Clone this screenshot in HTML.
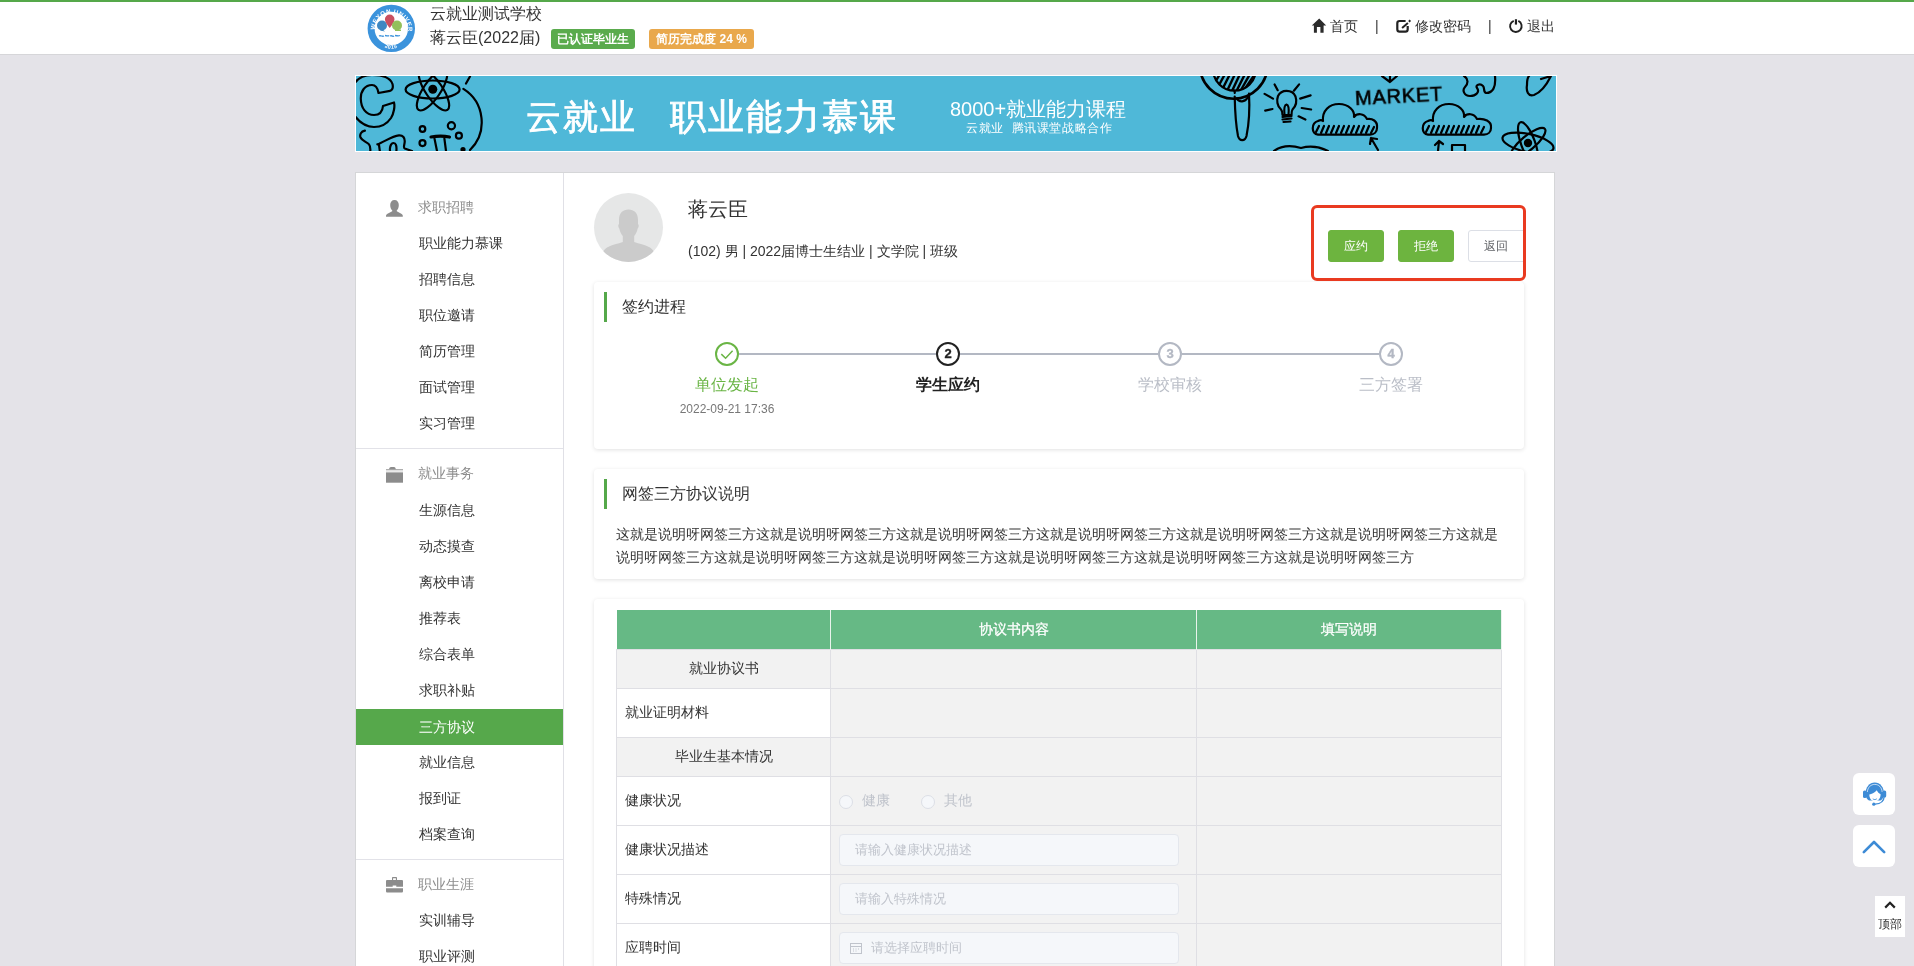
<!DOCTYPE html>
<html><head><meta charset="utf-8">
<style>
*{margin:0;padding:0;box-sizing:border-box;}
html,body{width:1914px;height:966px;overflow:hidden;}
body{will-change:transform;background:#e4e3e8;font-family:"Liberation Sans",sans-serif;color:#333;position:relative;}
.abs{position:absolute;}
#hdr{left:0;top:0;width:1914px;height:55px;background:#fff;border-bottom:1px solid #d6d6d9;}
#hdr::before{content:"";position:absolute;left:0;top:0;width:1914px;height:2px;background:#55a84a;}
.badge{position:absolute;top:29px;height:20px;line-height:20px;border-radius:3px;color:#fff;font-size:12px;font-weight:bold;text-align:center;}
.nav{position:absolute;top:16px;font-size:14px;color:#333;line-height:20px;white-space:nowrap;}
.sep{position:absolute;top:16px;font-size:14px;color:#333;line-height:20px;}
#banner{left:355px;top:75px;width:1202px;height:77px;background:#4fb8d8;border:1px solid #fff;overflow:hidden;}
#panel{left:355px;top:172px;width:1200px;height:800px;background:#fff;border:1px solid #d5d6d8;}
#side{left:356px;top:173px;width:208px;height:800px;border-right:1px solid #e0e0e6;}
.sh{position:absolute;left:62px;font-size:14px;color:#8c8c8c;line-height:20px;white-space:nowrap;}
.si{position:absolute;left:0;width:207px;height:36px;line-height:36px;padding-left:63px;font-size:14px;color:#333;white-space:nowrap;}
.si.act{background:#56a84b;color:#fff;}
.sdiv{position:absolute;left:0;width:207px;height:1px;background:#e2e2e8;}
.card{position:absolute;left:594px;width:930px;background:#fff;border-radius:4px;box-shadow:0 1px 4px rgba(0,0,0,0.12);}
.gbar{position:absolute;left:10px;width:3px;height:30px;background:#55a84a;}
.ctitle{position:absolute;left:28px;font-size:16px;color:#333;line-height:20px;white-space:nowrap;}

.btn{position:absolute;top:230px;width:56px;height:32px;line-height:30px;border-radius:3px;font-size:12px;text-align:center;border:1px solid transparent;}
.btn.g{background:#6db43f;border-color:#6db43f;color:#fff;}
.btn.w{background:#fff;border-color:#dcdfe6;color:#606266;width:58px;padding-right:3px;}
.line{position:absolute;top:71px;height:2px;}
.step{position:absolute;top:60px;width:24px;height:24px;border:2px solid;border-radius:50%;font-size:13px;font-weight:bold;line-height:20px;text-align:center;background:#fff;-webkit-text-stroke:0.35px currentColor;}
.slab{position:absolute;top:93px;width:200px;text-align:center;font-size:16px;line-height:20px;white-space:nowrap;}
.tb{position:absolute;left:22px;top:11px;width:885px;border-collapse:collapse;table-layout:fixed;font-size:14px;color:#333;}
.tb td{border:1px solid #dfdfe4;padding:0;vertical-align:middle;}
.tb .th td{background:#66b985;color:#fff;text-align:center;border-color:#e9f3ec;border-top:none;border-bottom:none;padding-top:1px;-webkit-text-stroke:0.25px #fff}
.tb .th td:first-child{border-left:none}
.tb td.gc{background:#f2f2f2;}
.tb td.c{text-align:center;}
.tb td.lab{background:#fff;padding-left:8px;}
.radio{position:relative;top:1px;display:inline-block;width:14px;height:14px;border:1px solid #dcdfe6;border-radius:50%;background:#f5f7fa;vertical-align:middle;margin-left:8px;}
.rl{display:inline-block;vertical-align:middle;margin-left:9px;color:#c0c4cc;font-size:14px;}
.inp{position:relative;margin-left:8px;width:340px;height:32px;line-height:30px;border:1px solid #e4e7ed;border-radius:4px;background:#f5f7fa;color:#c0c4cc;font-size:13px;padding-left:15px;white-space:nowrap;}
.fb{position:absolute;left:1853px;width:42px;height:42px;background:#fff;border-radius:6px;padding:8px;}
</style></head>
<body>
<div id="hdr" class="abs">
  <svg class="abs" style="left:366px;top:3px" width="51" height="51" viewBox="0 0 51 51">
    <defs><path id="ringtop" d="M9 27 A16.5 16.5 0 0 1 42 27"/><path id="ringbot" d="M15 42 A16.5 16.5 0 0 0 36 42"/></defs>
    <circle cx="25.3" cy="25.4" r="20.2" fill="#fff" stroke="#3b93dc" stroke-width="7"/>
    <text font-family="Liberation Sans" font-size="6.2" font-weight="bold" fill="#fff" letter-spacing="0.4"><textPath href="#ringtop">WEYON UNIVERSITY</textPath></text>
    <text font-family="Liberation Sans" font-size="5.5" font-weight="bold" fill="#fff" letter-spacing="0.3"><textPath href="#ringbot" startOffset="18%">2015</textPath></text>
    <circle cx="16" cy="22.5" r="5" fill="#3d87c2"/>
    <path d="M16 26 L19 28.5 L14 27.5Z" fill="#3d87c2"/>
    <path d="M23.7 11.5 a4.8 4.8 0 0 1 4.8 4.8 c0 3.2 -2.8 6 -4.8 8.8 c-2 -2.8 -4.8 -5.6 -4.8 -8.8 a4.8 4.8 0 0 1 4.8 -4.8z" fill="#c94f60"/>
    <circle cx="31" cy="22.5" r="5" fill="#93c05b"/>
    <path d="M29 26.5 h6 v1.5 h-6z" fill="#93c05b"/>
    <path d="M13 33 c2 -1 3 1 5 0 M19 32.5 c2 0 3 1 4 0 M24 33 c2 -1 3 1 4 0 M29 32.5 c2 0 3 1 5 0" stroke="#3b93dc" stroke-width="1.3" fill="none"/>
  </svg>
  <div class="abs" style="left:430px;top:3px;font-size:16px;line-height:22px;color:#333;white-space:nowrap">云就业测试学校</div>
  <div class="abs" style="left:430px;top:27px;font-size:16px;line-height:22px;color:#333;white-space:nowrap">蒋云臣(2022届)</div>
  <div class="badge" style="left:551px;width:84px;background:#5aab4d">已认证毕业生</div>
  <div class="badge" style="left:649px;width:105px;background:#e9a84c">简历完成度 24 %</div>
  <svg class="abs" style="left:1311px;top:18px" width="16" height="16" viewBox="0 0 16 16"><path d="M8.2 0.5 L15.2 7.6 H12.6 V14.7 H9.4 V9.1 H5.9 V14.7 H2.9 V7.6 H0.8 Z" fill="#2b2b2b"/></svg>
  <div class="nav" style="left:1330px">首页</div>
  <div class="sep" style="left:1375px">|</div>
  <svg class="abs" style="left:1395px;top:19px" width="16" height="15" viewBox="0 0 16 15"><path d="M10.6 2 H4.6 C3 2 2.3 2.8 2.3 4.3 V10.2 C2.3 11.8 3 12.6 4.6 12.6 H10.4 C12 12.6 12.7 11.8 12.7 10.2 V7" fill="none" stroke="#222" stroke-width="2.2"/><path d="M7.1 9 L12.9 4.1" stroke="#222" stroke-width="2"/><path d="M13.9 2.7 L15.4 1.3" stroke="#222" stroke-width="2"/></svg>
  <div class="nav" style="left:1415px">修改密码</div>
  <div class="sep" style="left:1488px">|</div>
  <svg class="abs" style="left:1508px;top:19px" width="16" height="15" viewBox="0 0 16 15"><path d="M5.75 1.78 A5.8 5.8 0 1 0 10.31 1.93" fill="none" stroke="#222" stroke-width="1.9"/><path d="M7.95 0.2 V5.6" stroke="#222" stroke-width="2.2"/></svg>
  <div class="nav" style="left:1527px">退出</div>
</div>
<div id="banner" class="abs">
<svg width="1200" height="75" viewBox="0 0 1200 75" style="position:absolute;left:0;top:0"><defs><clipPath id="lensclip"><circle cx="878.5" cy="-6.7" r="21.4"/></clipPath></defs>
<g fill="none" stroke="#000" stroke-width="2.2" stroke-linecap="round" stroke-linejoin="round">
  <path d="M-2 8 C2 2 8 -1 16 -1 C26 -1 34 1 36.5 8 C37.5 12 36 14.5 34 14.8 L22.5 17 C21.5 11 19.5 9 16 9 C9 9 4.5 15 4.8 23 C5 32 10 39 18 39 C23 39 26.5 36 27 30 L38 26.5 C39 30 38 37 35 42 C31 48 25 51 18 51 C10 51 3 46 -2 39"/>
  <ellipse cx="76.6" cy="13.5" rx="27" ry="9"/>
  <ellipse cx="78" cy="14" rx="24" ry="8.5" transform="rotate(56 78 14)"/>
  <ellipse cx="76" cy="14" rx="24" ry="8.5" transform="rotate(-56 76 14)"/>
  <path d="M107.4 12.9 A39.2 39.2 0 0 1 114 74"/>
  <path d="M110 7.5 L114 0.5"/>
  <circle cx="66.5" cy="53" r="2.8"/>
  <circle cx="95.4" cy="49.7" r="3.6"/>
  <circle cx="102.9" cy="59.7" r="3"/>
  <circle cx="66.5" cy="67.1" r="3"/>
  <path d="M75 61 C80 60 89 60 93.5 61" stroke-width="3.2"/>
  <path d="M78.5 62.6 L81 75 M88.4 62.6 L90 75"/>
  <circle cx="107" cy="73.5" r="1.5" fill="#000"/>
  <path d="M8.9 54.7 C5 55.5 3.5 58.5 4.5 61.5 C6 65 11 66 13 68.4 C14.3 70 14.5 72 14.3 75"/>
  <path d="M21.4 68.4 C28 66 36 60 42.9 59.3 C47 59 49 62 48.7 65.9 C48.5 69 47 72 48.7 72.5 L56 75 M23 69 L23.8 75 M34 75 C33.5 71 35 67 37.5 67 C40 67 40.8 70 40.4 75"/>
  <path d="M878.7 20.6 C879 35 880 50 882 60 C883.5 65.5 889 65.5 890.5 60 C892.5 50 894 35 893 17.7"/>
  <path d="M880.8 22.5 C883 26.5 889 26.5 891.7 21.5"/>
  <circle cx="877.7" cy="-11.2" r="33.9" stroke-width="2.6"/>
  <circle cx="878.5" cy="-6.7" r="21.4"/><path d="M878.5 14.7 L878.8 17"/>
  <g clip-path="url(#lensclip)" stroke-width="2.4"><path d="M858 8 L864 -2 M862.5 10 L869 -2 M867 12 L874 -2 M871.5 14 L879 -2 M876 15 L884 -2 M880.5 15 L889 -2 M885 14 L894 -2 M889.5 12 L899 -2 M894 10 L902 -2"/></g>
  <path d="M925 33.5 C921 30 920.5 24 922 20 C924 16 927.5 14.8 930.5 14.8 C934 14.8 938 16.5 939.5 20.5 C941 25 940 30 936.5 33.5 C935.5 35 935.5 37 935.5 39 L926.5 39 C926.5 37 926.5 35 925 33.5Z"/>
  <path d="M928.5 39 C928 34 928.5 29 930.5 28.5 C932.5 29 933 34 932.5 39"/>
  <path d="M926.5 41 L935.5 40 M926.5 43.5 L935.5 42.5 M927.5 46 L934.5 45.5"/>
  <path d="M918.6 8.4 L921.7 14.2 M937.9 14.7 L943.1 8.4 M908.6 17.9 L917 22.6 M944.2 22.6 L954.6 19.4 M909.2 34.6 L916.5 33 M945.7 32 L955.1 33.5 M942.6 40.3 L949.4 43.5"/>
  <path d="M962 58.6 C955 58 955 47 962 45 C964 44 966 44 967 45 C966 35 973 28 983 28 C993 28 999 35 998 41 C1001 37 1008 37 1011 43 C1016 42 1022 45 1021 52 C1021 56 1018 58.6 1014 58.6 Z"/>
  <path d="M960 56 L963 50 M965 57 L968 50 M970 57 L973 50 M975 57 L978 50 M980 57 L983 50 M985 57 L988 50 M990 57 L993 50 M995 57 L998 50 M1000 57 L1003 50 M1005 57 L1008 50 M1010 57 L1013 50 M1015 57 L1018 51"/>
  <path d="M1072 58.6 C1065 58 1065 47 1072 45 C1074 44 1076 44 1077 45 C1076 35 1083 28 1093 28 C1103 28 1109 35 1108 41 C1111 37 1118 37 1121 43 C1128 42 1136 45 1135 52 C1135 56 1132 58.6 1128 58.6 Z"/>
  <path d="M1070 56 L1073 50 M1075 57 L1078 50 M1080 57 L1083 50 M1085 57 L1088 50 M1090 57 L1093 50 M1095 57 L1098 50 M1100 57 L1103 50 M1105 57 L1108 50 M1110 57 L1113 50 M1115 57 L1118 50 M1120 57 L1123 50 M1125 57 L1128 51"/>
  <path d="M1026 0 L1034 6 L1041 0 M1034 6 L1034 0"/>
  <path d="M1108 0 C1113 3 1112 8 1109 11 C1106 14 1108 20 1114 20 C1120 20 1124 16 1121 12 C1119 9 1124 7 1127 10 C1129 12 1127 16 1130 17 C1137 17 1140 11 1139 0"/>
  <path d="M1195 0 C1191 8 1186 16 1178 19 C1172 21 1170 15 1171 9 C1171 4 1172 1 1173 0 M1185 3 L1195 0"/>
  <ellipse cx="1172" cy="67" rx="26" ry="9" transform="rotate(12 1172 67)"/>
  <ellipse cx="1172" cy="67" rx="22" ry="7" transform="rotate(70 1172 67)"/>
  <ellipse cx="1172" cy="67" rx="22" ry="7" transform="rotate(-40 1172 67)"/>
  <path d="M1022 74 L1015 62 M1015 62 L1014 68 M1015 62 L1021 63"/>
  <path d="M1082 75 L1083 65 M1083 65 L1079 69 M1083 65 L1087 68"/>
  <path d="M1096 75 L1096 69 L1109 69 L1109 75"/>
  <path d="M918 75 C925 70 935 69 945 72 C952 70 962 70 972 75"/>
</g>
<circle cx="76.8" cy="13.3" r="4.5" fill="#000"/>
<circle cx="1172" cy="67" r="4.2" fill="#000"/>
<text x="999" y="26.5" font-family="Liberation Sans" font-size="20" fill="#000" stroke="#000" stroke-width="0.6" transform="rotate(-3 1040 20)" letter-spacing="0.8">MARKET</text>
</svg>
<div class="abs" style="left:170px;top:21px;font-size:35px;line-height:40px;color:#fff;white-space:nowrap;letter-spacing:2px;-webkit-text-stroke:0.8px #fff">云就业</div>
<div class="abs" style="left:314px;top:21px;font-size:36px;line-height:40px;color:#fff;white-space:nowrap;letter-spacing:2px;-webkit-text-stroke:0.8px #fff">职业能力慕课</div>
<div class="abs" style="left:594px;top:21px;font-size:20px;line-height:24px;color:#fff;white-space:nowrap">8000+就业能力课程</div>
<div class="abs" style="left:610px;top:44px;font-size:12px;line-height:16px;color:#fff;white-space:nowrap;letter-spacing:0.6px">云就业&nbsp;&nbsp;腾讯课堂战略合作</div>
</div>
<div id="panel" class="abs"></div>
<div id="side" class="abs">
  <svg class="abs" style="left:30px;top:27px" width="17" height="17" viewBox="0 0 17 17"><path d="M8.5 0 C5.8 0 4.2 2 4.2 5 C4.2 7.5 5 9.3 6.2 10.3 L6.2 11.2 L1.5 13.8 C0.5 14.4 0 15 0 16 V16.8 H16.8 V16 C16.8 15 16.3 14.4 15.3 13.8 L10.8 11.2 V10.3 C12 9.3 12.8 7.5 12.8 5 C12.8 2 11.2 0 8.5 0Z" fill="#8c8c8c"/></svg>
  <div class="sh" style="top:24px">求职招聘</div>
  <div class="si" style="top:52px">职业能力慕课</div>
  <div class="si" style="top:88px">招聘信息</div>
  <div class="si" style="top:124px">职位邀请</div>
  <div class="si" style="top:160px">简历管理</div>
  <div class="si" style="top:196px">面试管理</div>
  <div class="si" style="top:232px">实习管理</div>
  <div class="sdiv" style="top:275px"></div>
  <svg class="abs" style="left:30px;top:294px" width="17" height="16" viewBox="0 0 17 16"><path d="M3 2.3 C3.3 0.8 4 0 5 0 H8 C9 0 9.5 0.8 9.8 2.3Z" fill="#8c8c8c"/><rect x="0" y="2.3" width="17" height="1.1" fill="#8c8c8c"/><rect x="0" y="3.4" width="17" height="2" fill="#e9e9e9"/><rect x="0" y="5.4" width="17" height="10.3" fill="#8c8c8c"/></svg>
  <div class="sh" style="top:290px">就业事务</div>
  <div class="si" style="top:319px">生源信息</div>
  <div class="si" style="top:355px">动态摸查</div>
  <div class="si" style="top:391px">离校申请</div>
  <div class="si" style="top:427px">推荐表</div>
  <div class="si" style="top:463px">综合表单</div>
  <div class="si" style="top:499px">求职补贴</div>
  <div class="si act" style="top:536px">三方协议</div>
  <div class="si" style="top:571px">就业信息</div>
  <div class="si" style="top:607px">报到证</div>
  <div class="si" style="top:643px">档案查询</div>
  <div class="sdiv" style="top:686px"></div>
  <svg class="abs" style="left:30px;top:704px" width="17" height="16" viewBox="0 0 17 16"><path d="M6 3.2 V1 C6 0.4 6.4 0 7 0 H10 C10.6 0 11 0.4 11 1 V3.2 H9.9 V1.2 H7.1 V3.2Z" fill="#8c8c8c"/><path d="M1.2 3 H15.8 C16.5 3 17 3.5 17 4.2 V9.8 H10.3 V8.5 H6.7 V9.8 H0 V4.2 C0 3.5 0.5 3 1.2 3Z" fill="#8c8c8c"/><path d="M0 11.2 H17 V14.2 C17 15 16.4 15.5 15.6 15.5 H1.4 C0.6 15.5 0 15 0 14.2Z" fill="#8c8c8c"/></svg>
  <div class="sh" style="top:701px">职业生涯</div>
  <div class="si" style="top:729px">实训辅导</div>
  <div class="si" style="top:765px">职业评测</div>
</div>

<div id="main">
  <div class="abs" style="left:594px;top:193px;width:69px;height:69px;border-radius:50%;background:#e6e7e7;overflow:hidden">
    <svg width="69" height="69" viewBox="0 0 69 69"><path d="M34.5 16.6 C29 16.6 25 20 25 27 L25 31 C24 31.5 24 34 25.3 35.5 C26 39 27.5 41.5 28.8 43 L28.8 49 C24 50.5 18 52 14 54 C11.5 55 10 57 9 59 L9 69 H60 V59 C59 57 57.5 55 55 54 C51 52 45 50.5 40.2 49 L40.2 43 C41.5 41.5 43 39 43.7 35.5 C45 34 45 31.5 44 31 L44 27 C44 20 40 16.6 34.5 16.6Z" fill="#cbcbcb"/></svg>
  </div>
  <div class="abs" style="left:688px;top:197px;font-size:20px;line-height:24px;color:#333;white-space:nowrap">蒋云臣</div>
  <div class="abs" style="left:688px;top:241px;font-size:14px;line-height:20px;color:#333;white-space:nowrap">(102) 男 | 2022届博士生结业 | 文学院 | 班级</div>
  <div class="abs" style="left:1311px;top:205px;width:215px;height:76px;border:3px solid #e93a20;border-radius:6px;z-index:2"></div>
  <div class="btn g" style="left:1328px">应约</div>
  <div class="btn g" style="left:1398px">拒绝</div>
  <div class="btn w" style="left:1468px">返回</div>

  <div class="card" style="top:282px;height:167px">
    <div class="gbar" style="top:10px"></div>
    <div class="ctitle" style="top:15px">签约进程</div>
    <div class="line" style="left:145px;width:197px;background:#b3b8c3"></div>
    <div class="line" style="left:366px;width:198px;background:#b3b8c3"></div>
    <div class="line" style="left:588px;width:197px;background:#b3b8c3"></div>
    <div class="step" style="left:121px;border-color:#6ab545"><svg width="20" height="20" viewBox="0 0 20 20" style="position:absolute;left:0;top:0"><path d="M4.3 10.1 L8.6 14.3 L15.6 6.8" fill="none" stroke="#6ab545" stroke-width="1.5"/></svg></div>
    <div class="step" style="left:342px;border-color:#222;color:#222">2</div>
    <div class="step" style="left:564px;border-color:#b3b8c3;color:#b3b8c3">3</div>
    <div class="step" style="left:785px;border-color:#b3b8c3;color:#b3b8c3">4</div>
    <div class="slab" style="left:33px;color:#6ab545">单位发起</div>
    <div class="slab" style="left:254px;color:#222;font-weight:bold">学生应约</div>
    <div class="slab" style="left:476px;color:#babec7">学校审核</div>
    <div class="slab" style="left:697px;color:#babec7">三方签署</div>
    <div class="abs" style="left:33px;width:200px;top:119px;text-align:center;font-size:12px;line-height:16px;color:#777">2022-09-21 17:36</div>
  </div>

  <div class="card" style="top:469px;height:110px">
    <div class="gbar" style="top:10px"></div>
    <div class="ctitle" style="top:15px">网签三方协议说明</div>
    <div class="abs" style="left:22px;top:54px;width:886px;font-size:14px;line-height:23px;color:#333">这就是说明呀网签三方这就是说明呀网签三方这就是说明呀网签三方这就是说明呀网签三方这就是说明呀网签三方这就是说明呀网签三方这就是说明呀网签三方这就是说明呀网签三方这就是说明呀网签三方这就是说明呀网签三方这就是说明呀网签三方这就是说明呀网签三方</div>
  </div>

  <div class="card" style="top:599px;height:400px">
    <table class="tb">
      <colgroup><col style="width:214px"><col style="width:366px"><col style="width:305px"></colgroup>
      <tr class="th" style="height:39px"><td></td><td>协议书内容</td><td>填写说明</td></tr>
      <tr style="height:39px"><td class="gc c">就业协议书</td><td class="gc"></td><td class="gc"></td></tr>
      <tr style="height:49px"><td class="lab">就业证明材料</td><td class="gc"></td><td class="gc"></td></tr>
      <tr style="height:39px"><td class="gc c">毕业生基本情况</td><td class="gc"></td><td class="gc"></td></tr>
      <tr style="height:49px"><td class="lab">健康状况</td><td class="gc"><span class="radio"></span><span class="rl">健康</span><span class="radio" style="margin-left:31px"></span><span class="rl">其他</span></td><td class="gc"></td></tr>
      <tr style="height:49px"><td class="lab">健康状况描述</td><td class="gc"><div class="inp">请输入健康状况描述</div></td><td class="gc"></td></tr>
      <tr style="height:49px"><td class="lab">特殊情况</td><td class="gc"><div class="inp">请输入特殊情况</div></td><td class="gc"></td></tr>
      <tr style="height:49px"><td class="lab">应聘时间</td><td class="gc"><div class="inp" style="padding-left:31px"><svg width="12" height="12" viewBox="0 0 12 12" style="position:absolute;left:10px;top:9px"><rect x="0.5" y="1.5" width="11" height="10" fill="none" stroke="#c0c4cc" stroke-width="1"/><path d="M0.5 4.5 H11.5 M3 7 H4 M5.5 7 H6.5 M8 7 H9 M3 9 H4 M5.5 9 H6.5" stroke="#c0c4cc" stroke-width="1"/></svg>请选择应聘时间</div></td><td class="gc"></td></tr>
    </table>
  </div>
</div>
<div class="fb" style="top:773px"><svg width="26" height="26" viewBox="0 0 26 26">
<path d="M4.5 13 C4.5 6 8.5 1.5 13.8 1.5 C19 1.5 23 6 23 13 C23 16 21.5 18.5 19.5 19.5 L8 19.5 C6 18.5 4.5 16 4.5 13Z" fill="#3d8bd6"/>
<path d="M6.3 11 C6.8 6.3 9.7 3.4 13.8 3.4 C17.8 3.4 20.7 6.3 21.2 11" fill="none" stroke="#fff" stroke-width="0.7"/>
<path d="M8.3 13.5 C10.5 13.2 13.5 12 15.8 9.3 C16.6 11.2 18 12.6 19.6 13.3 C19.6 17.6 17.2 20.3 13.9 20.3 C10.7 20.3 8.3 17.6 8.3 13.5Z" fill="#fff"/>
<path d="M11.8 17.8 C13 18.8 14.6 18.8 15.8 17.8" fill="none" stroke="#3d8bd6" stroke-width="0.9"/>
<rect x="2" y="9.5" width="3.6" height="7.5" rx="1.6" fill="#3d8bd6"/>
<rect x="21.6" y="9.5" width="3.6" height="7" rx="1.6" fill="#3d8bd6"/>
<path d="M23.2 15.5 C23 20 19.5 22.8 14 23.2" fill="none" stroke="#3d8bd6" stroke-width="1.3"/>
<circle cx="12.8" cy="23.2" r="1.6" fill="#3d8bd6"/>
</svg></div>
<div class="fb" style="top:825px"><svg width="26" height="26" viewBox="0 0 26 26"><path d="M2.8 19.2 L13 9 L23.2 19.2" fill="none" stroke="#3d8bd6" stroke-width="2.6" stroke-linecap="round" stroke-linejoin="round"/></svg></div>
<div class="abs" style="left:1875px;top:896px;width:30px;height:41px;background:#fff;text-align:center">
  <svg width="12" height="8" viewBox="0 0 12 8" style="position:absolute;left:9px;top:5px"><path d="M1.2 6.6 L6 1.8 L10.8 6.6" fill="none" stroke="#222" stroke-width="2.2"/></svg>
  <div class="abs" style="left:0;top:20px;width:30px;font-size:12px;line-height:16px;color:#333">顶部</div>
</div>
</body></html>
